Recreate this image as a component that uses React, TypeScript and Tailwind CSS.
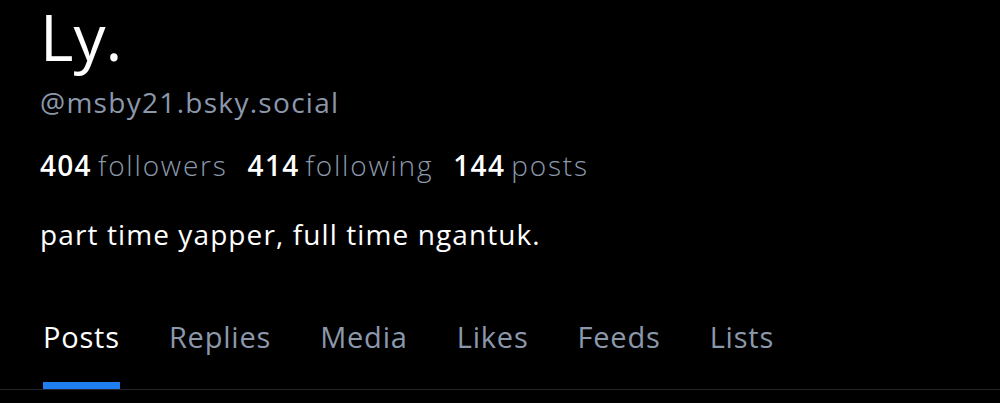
import React from 'react';

const tabs = ['Posts', 'Replies', 'Media', 'Likes', 'Feeds', 'Lists'];

const stats = [
  { n: '404', label: 'followers' },
  { n: '414', label: 'following' },
  { n: '144', label: 'posts' },
];

export default function App() {
  return (
    <div className="w-[1000px] h-[403px] bg-black overflow-hidden font-['Open_Sans',sans-serif] [font-variant-ligatures:none]">
      <div className="flex flex-col pl-[40px] pt-[1px]">
        <h1 className="text-[64px] leading-[72px] text-white font-normal">Ly.</h1>
        <div className="mt-[13px] text-[28px] leading-[32px] tracking-[1.3px] text-[#8b98ab]">@msby21.bsky.social</div>

        {/* stats */}
        <div className="mt-[31px] flex gap-[20px] text-[28px] leading-[32px] tracking-[1.3px]">
          {stats.map((s) => (
            <div key={s.label} className="flex gap-[6px]">
              <span className="text-white font-semibold">{s.n}</span>
              <span className="text-[#8b98ab] font-light tracking-[1.8px]">{s.label}</span>
            </div>
          ))}
        </div>

        <p className="mt-[37px] text-[28px] leading-[32px] tracking-[1.1px] text-white">part time yapper, full time ngantuk.</p>
      </div>

      {/* tabs */}
      <div className="mt-[69px] border-b border-[#23262b] pl-[43px] flex gap-[49px]">
        {tabs.map((t, i) => (
          <div key={t} className="flex flex-col">
            <span className={`text-[29px] leading-[36px] tracking-[0.8px] ${i === 0 ? 'text-white' : 'text-[#8b98ab]'}`}>{t}</span>
            <div className={`mt-[27px] h-[7px] ${i === 0 ? 'bg-[#1f7ef0]' : 'bg-transparent'}`} />
          </div>
        ))}
      </div>
    </div>
  );
}
